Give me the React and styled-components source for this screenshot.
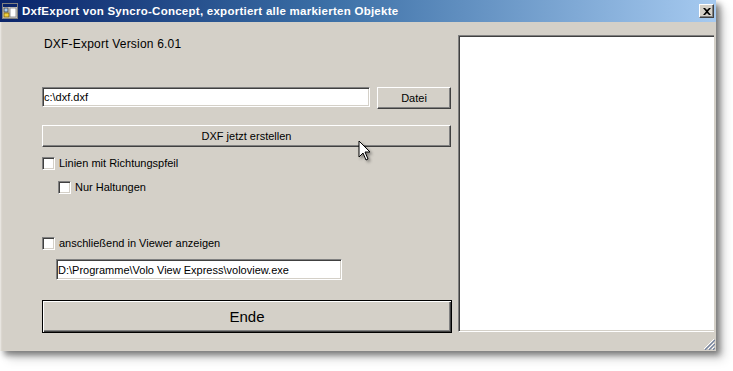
import React from "react";
import styled, { createGlobalStyle } from "styled-components";

const Global = createGlobalStyle`
  html, body { margin: 0; padding: 0; background: #ffffff; }
  body { font-family: "Liberation Sans", Arial, sans-serif; font-size: 11px; color: #000; }
  #root { width: 733px; height: 371px; position: relative; overflow: hidden; }
`;

const Window = styled.div`
  position: relative;
  width: 716px;
  height: 351px;
  background: #d4d0c8;
  display: flex;
  flex-direction: column;
  box-shadow: 4px 4px 6px rgba(0, 0, 0, 0.45), 8px 8px 10px rgba(0, 0, 0, 0.15),
    inset 2px 0 2px -1px #efede8;
`;

const TitleBar = styled.div`
  height: 22px;
  flex: none;
  display: flex;
  align-items: center;
  padding: 0 2px 0 2px;
  background: linear-gradient(to right, #0a246a 0%, #3a6ea5 45%, #a6caf0 100%);
`;

const TitleText = styled.span`
  flex: 1;
  margin-left: 4px;
  color: #ffffff;
  font-family: "Liberation Sans", Arial, sans-serif;
  font-weight: bold;
  font-size: 11.5px;
  letter-spacing: 0.26px;
  white-space: nowrap;
`;

const CloseButton = styled.div`
  width: 15px;
  height: 14px;
  box-sizing: border-box;
  background: #d4d0c8;
  border-top: 1px solid #ffffff;
  border-left: 1px solid #ffffff;
  border-right: 1px solid #404040;
  border-bottom: 1px solid #404040;
  box-shadow: inset -1px -1px #808080;
  display: flex;
  align-items: center;
  justify-content: center;
`;

const Body = styled.div`
  flex: 1;
  display: flex;
  padding-right: 2px;
`;

const LeftPane = styled.div`
  width: 458px;
  box-sizing: border-box;
  padding: 0 6px 0 42px;
  display: flex;
  flex-direction: column;
`;

const Label = styled.div`
  margin-top: ${(p) => p.$top}px;
  margin-left: 2px;
  height: 14px;
  line-height: 14px;
  font-size: 12px;
  letter-spacing: 0.2px;
`;

const Row = styled.div`
  display: flex;
  align-items: flex-start;
  gap: ${(p) => p.$gap || 0}px;
  margin-top: ${(p) => p.$top}px;
  margin-left: ${(p) => p.$indent || 0}px;
`;

const TextBox = styled.div`
  width: ${(p) => p.$w}px;
  height: ${(p) => p.$h || 20}px;
  box-sizing: border-box;
  background: #ffffff;
  border-top: 1px solid #808080;
  border-left: 1px solid #808080;
  border-right: 1px solid #ffffff;
  border-bottom: 1px solid #ffffff;
  box-shadow: inset 1px 1px #404040, inset -1px -1px #d4d0c8;
  padding: 0 1px;
  display: flex;
  align-items: center;
  white-space: nowrap;
`;

const Button = styled.div`
  width: ${(p) => p.$w}px;
  height: ${(p) => p.$h || 22}px;
  box-sizing: border-box;
  background: #d4d0c8;
  border-top: 1px solid #ffffff;
  border-left: 1px solid #ffffff;
  border-right: 1px solid #404040;
  border-bottom: 1px solid #404040;
  box-shadow: inset -1px -1px #808080;
  display: flex;
  align-items: center;
  justify-content: center;
  font-size: ${(p) => p.$size || 11}px;
`;

const DefaultButton = styled(Button)`
  border: 1px solid #000000;
  box-shadow: inset 1px 1px #ffffff, inset -1px -1px #404040, inset -2px -2px #808080;
`;

const Check = styled.div`
  width: 13px;
  height: 13px;
  flex: none;
  box-sizing: border-box;
  background: #ffffff;
  border-top: 1px solid #808080;
  border-left: 1px solid #808080;
  border-right: 1px solid #ffffff;
  border-bottom: 1px solid #ffffff;
  box-shadow: inset 1px 1px #404040, inset -1px -1px #d4d0c8;
`;

const CheckLabel = styled.span`
  margin-left: 4px;
  line-height: 13px;
  white-space: nowrap;
`;

const OutputPanel = styled.div`
  flex: 1;
  margin: 13px 0 19px 0;
  box-sizing: border-box;
  background: #ffffff;
  border-top: 1px solid #808080;
  border-left: 1px solid #808080;
  border-bottom: 1px solid #ffffff;
  box-shadow: inset 1px 1px #404040, inset 0 -1px #d4d0c8;
`;

const Grip = styled.svg`
  position: absolute;
  right: 1px;
  bottom: 1px;
`;

const Cursor = styled.svg`
  position: absolute;
  left: 358px;
  top: 140px;
  filter: drop-shadow(2px 2px 1.5px rgba(0, 0, 0, 0.4));
`;

function AppIcon() {
  return (
    <svg width="16" height="16" viewBox="0 0 16 16">
      <rect x="0.5" y="0.5" width="15" height="15" fill="#d4d0c8" stroke="#808080" />
      <rect x="1" y="1" width="14" height="3" fill="#0a246a" />
      <rect x="2" y="5" width="4" height="4" fill="#a6caf0" stroke="#404040" strokeWidth="0.8" />
      <rect x="2" y="10" width="5" height="4" fill="#f0d040" stroke="#806000" strokeWidth="0.8" />
      <rect x="8" y="5" width="6" height="9" fill="#ffffff" stroke="#808080" strokeWidth="0.8" />
    </svg>
  );
}

export default function App() {
  return (
    <>
      <Global />
      <Window>
        <TitleBar>
          <AppIcon />
          <TitleText>DxfExport von Syncro-Concept, exportiert alle markierten Objekte</TitleText>
          <CloseButton>
            <svg width="8" height="7" viewBox="0 0 8 7">
              <path d="M0 0 L2 0 L4 2 L6 0 L8 0 L5 3.5 L8 7 L6 7 L4 5 L2 7 L0 7 L3 3.5 Z" fill="#000" />
            </svg>
          </CloseButton>
        </TitleBar>
        <Body>
          <LeftPane>
            <Label $top={15}>DXF-Export Version 6.01</Label>
            <Row $top={36} $gap={7}>
              <TextBox $w={328}>c:\dxf.dxf</TextBox>
              <Button $w={74}>Datei</Button>
            </Row>
            <Row $top={16}>
              <Button $w={409}>DXF jetzt erstellen</Button>
            </Row>
            <Row $top={10}>
              <Check />
              <CheckLabel>Linien mit Richtungspfeil</CheckLabel>
            </Row>
            <Row $top={11} $indent={16}>
              <Check />
              <CheckLabel>Nur Haltungen</CheckLabel>
            </Row>
            <Row $top={43}>
              <Check />
              <CheckLabel>anschließend in Viewer anzeigen</CheckLabel>
            </Row>
            <Row $top={9} $indent={14}>
              <TextBox $w={286} $h={21}>D:\Programme\Volo View Express\voloview.exe</TextBox>
            </Row>
            <Row $top={20}>
              <DefaultButton $w={410} $h={33} $size={15}>Ende</DefaultButton>
            </Row>
          </LeftPane>
          <OutputPanel />
        </Body>
        <Grip width="12" height="12" viewBox="0 0 12 12">
          <path d="M11 1 L1 11 M11 5 L5 11 M11 9 L9 11" stroke="#ffffff" strokeWidth="1" />
          <path d="M12 2 L2 12 M12 6 L6 12 M12 10 L10 12" stroke="#7080a0" strokeWidth="1.2" />
        </Grip>
      </Window>
      <Cursor width="14" height="22" viewBox="0 0 14 22">
        <path d="M1 1 L1 17 L5 13 L8 20 L10 19 L7 12 L12 12 Z" fill="#ffffff" stroke="#000000" strokeWidth="1" strokeLinejoin="miter" />
      </Cursor>
    </>
  );
}
